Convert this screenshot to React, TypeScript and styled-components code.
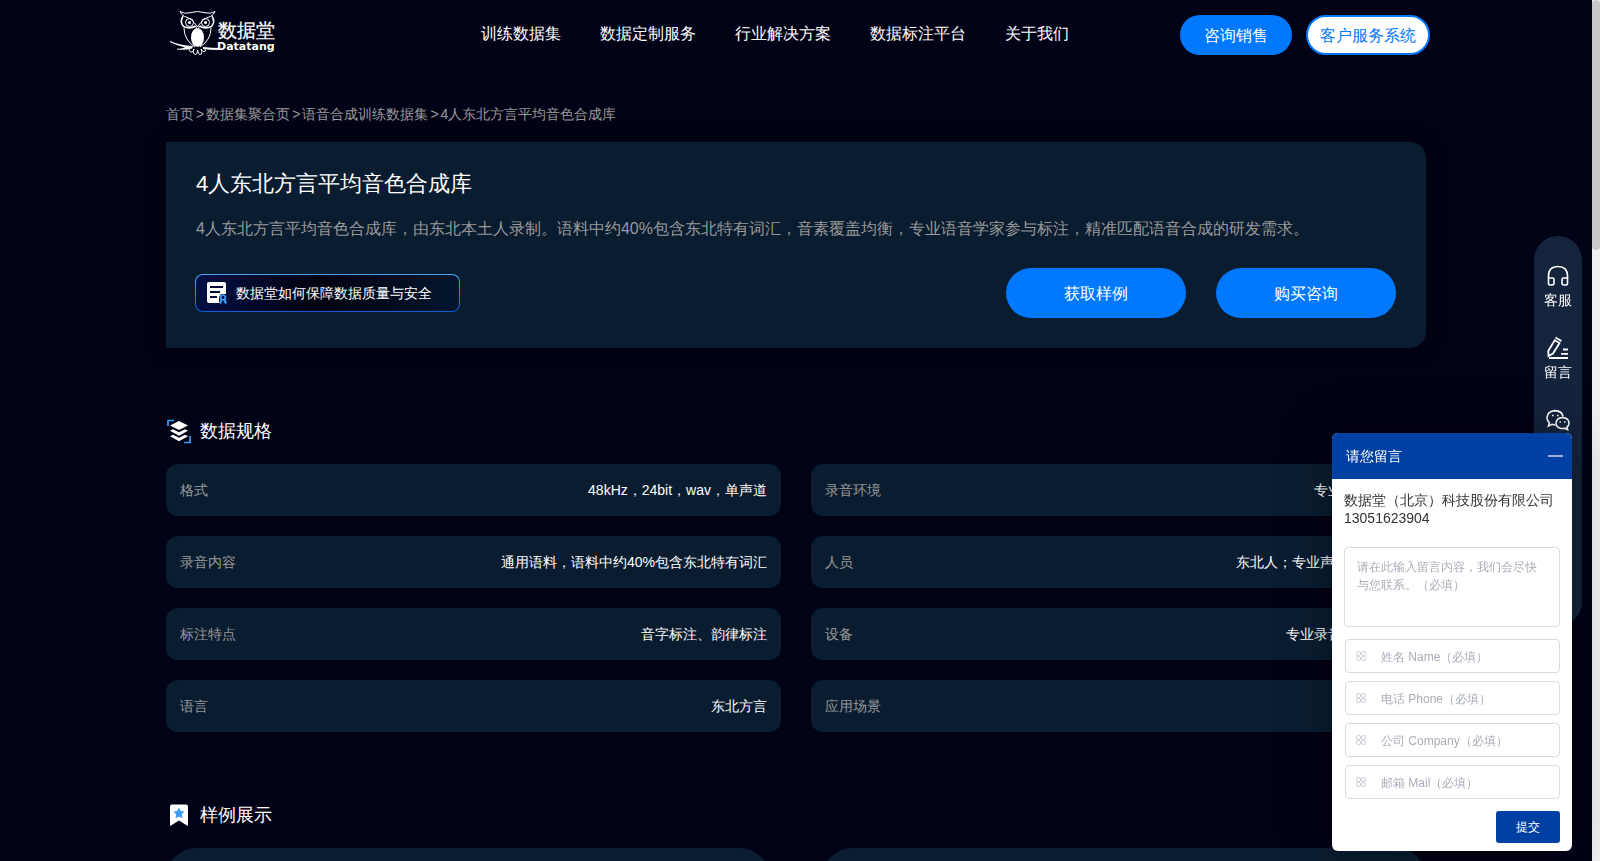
import React from 'react';
import styled, { createGlobalStyle, css } from 'styled-components';

const color = {
  page: '#020216',
  panel: '#0a1c30',
  blue: '#0079ff',
  chatBlue: '#0040a3',
  muted: '#999999',
  line: '#d9dae4',
  hint: '#a9adb8',
};

const GlobalStyle = createGlobalStyle`
  *, *::before, *::after { box-sizing: border-box; }
  body { margin: 0; background: ${color.page}; }
  body, button, input, textarea {
    font-family: "Liberation Sans", Arial, sans-serif;
  }
  h1, h2, p, ul, ol, dl, dd { margin: 0; padding: 0; font-weight: 400; }
  ul, ol { list-style: none; }
  a { color: inherit; text-decoration: none; }
  button { cursor: pointer; padding: 0; border: 0; }
`;

const Shell = styled.div`
  display: grid;
  grid-template-columns: minmax(0, 1fr) 8px;
  height: 100vh;
  color: #fff;
`;

const Scroller = styled.div`
  overflow: hidden auto;
  scrollbar-width: none;
`;

const ScrollTrack = styled.div`
  background: #f1f1f1;
`;

const ScrollThumb = styled.div`
  height: 29%;
  border-radius: 4px;
  background: #c9c9c9;
`;

const Header = styled.header`
  display: flex;
  align-items: flex-start;
  max-width: 1268px;
  height: 70px;
  margin: 0 auto;
  padding: 8px 0 0 6px;
`;

const NavList = styled.ul`
  display: flex;
  gap: 39px;
  margin-left: 203px;
  padding-top: 16px;
  font-size: 16px;
  line-height: 20px;
  white-space: nowrap;
`;

const HeaderActions = styled.div`
  display: flex;
  gap: 14px;
  margin-left: auto;
  padding-top: 7px;
`;

const PillButton = styled.button<{ $size: 'small' | 'large'; $outlined?: boolean }>`
  border-radius: 25px;
  background: ${color.blue};
  color: #fff;
  font-size: 16px;
  ${(p) =>
    p.$size === 'small'
      ? css`
          height: 40px;
          padding: 2px 24px 0;
        `
      : css`
          width: 180px;
          height: 50px;
          padding-top: 2px;
        `}
  ${(p) =>
    p.$outlined &&
    css`
      padding: 2px 12px 0;
      border: 2px solid ${color.blue};
      background: #fff;
      color: ${color.blue};
    `}
`;

const Main = styled.main`
  max-width: 1260px;
  margin: 0 auto;
`;

const Crumbs = styled.ol`
  display: flex;
  padding: 34px 0 18px;
  color: ${color.muted};
  font-size: 14px;
  line-height: 20px;
`;

const Crumb = styled.li`
  & + &::before {
    content: '>';
    margin: 0 2px;
  }
`;

const Hero = styled.section`
  padding: 28px 30px 30px;
  border-radius: 0 16px 16px 0;
  background: ${color.panel};
  box-shadow: 0 0 16px rgba(0, 0, 0, 0.5);
`;

const HeroTitle = styled.h1`
  font-size: 22px;
  line-height: 28px;
`;

const HeroText = styled.p`
  padding-top: 20px;
  color: ${color.muted};
  font-size: 16px;
  line-height: 22px;
`;

const HeroActions = styled.div`
  display: flex;
  align-items: center;
  gap: 30px;
  padding-top: 28px;
`;

const QualityLink = styled.a`
  display: flex;
  align-items: center;
  gap: 8px;
  width: 265px;
  height: 38px;
  margin: 0 auto 0 -1px;
  padding-left: 11px;
  border: 1px solid transparent;
  border-radius: 8px;
  background:
    linear-gradient(90deg, #001046, #02020f 45%, #03162e) padding-box,
    linear-gradient(180deg, #46a6f5, #1259d8) border-box;
  font-size: 14px;
  line-height: 18px;
`;

const Section = styled.section`
  padding-top: 70px;
`;

const SectionTitle = styled.h2`
  display: flex;
  align-items: center;
  gap: 9px;
  height: 26px;
  margin-bottom: 20px;
  padding-left: 1px;
  font-size: 18px;
`;

const SpecGrid = styled.dl`
  display: grid;
  grid-template-columns: 1fr 1fr;
  gap: 20px 30px;
`;

const SpecCard = styled.div`
  display: flex;
  align-items: center;
  justify-content: space-between;
  height: 52px;
  padding: 2px 14px 0;
  border-radius: 12px;
  background: ${color.panel};
  font-size: 14px;
`;

const SpecName = styled.dt`
  color: ${color.muted};
`;

const SampleGrid = styled.div`
  display: grid;
  grid-template-columns: 1fr 1fr;
  gap: 52px;
  padding-bottom: 60px;
`;

const SampleCard = styled.article`
  height: 140px;
  border-radius: 30px;
  background: ${color.panel};
`;

const SideBar = styled.aside`
  position: fixed;
  top: 236px;
  right: 18px;
  display: flex;
  flex-direction: column;
  gap: 20px;
  width: 48px;
  height: 390px;
  padding-top: 28px;
  border-radius: 24px;
  background: #14243d;
  color: #fff;
`;

const SideItem = styled.a`
  display: flex;
  flex-direction: column;
  align-items: center;
  gap: 2px;
  height: 52px;
  font-size: 14px;
  line-height: 20px;
`;

const Chat = styled.form`
  position: fixed;
  right: 28px;
  bottom: 10px;
  width: 240px;
  border-radius: 6px;
  background: #fff;
  box-shadow: 0 0 50px rgba(0, 0, 0, 0.35);
  color: #333;
`;

const ChatHeader = styled.header`
  display: flex;
  align-items: center;
  justify-content: space-between;
  height: 46px;
  padding: 0 9px 0 14px;
  border-radius: 6px 6px 0 0;
  background: ${color.chatBlue};
  color: #fff;
  font-size: 14px;
  line-height: 18px;
`;

const Minimize = styled.button`
  width: 15px;
  height: 16px;
  background: linear-gradient(#98b2dc, #98b2dc) center / 15px 2px no-repeat;
`;

const ChatBody = styled.div`
  display: flex;
  flex-direction: column;
  padding: 12px 12px 8px;
`;

const Company = styled.p`
  height: 56px;
  font-size: 14px;
  line-height: 18px;
`;

const fieldStyle = css`
  width: 100%;
  border: 1px solid ${color.line};
  border-radius: 4px;
  background: #fff;
  color: #333;
  font-size: 12px;
  outline: none;
  &::placeholder { color: ${color.hint}; opacity: 1; }
`;

const Message = styled.textarea`
  ${fieldStyle}
  height: 80px;
  margin-bottom: 12px;
  padding: 10px 12px;
  line-height: 18px;
  resize: none;
`;

const Field = styled.label`
  display: grid;
  align-items: center;
  margin: 0 0 8px 1px;
  > * { grid-area: 1 / 1; }
  > svg { margin-left: 11px; pointer-events: none; }
`;

const FieldInput = styled.input`
  ${fieldStyle}
  height: 34px;
  padding: 1px 8px 0 35px;
`;

const Submit = styled.button`
  align-self: flex-end;
  width: 64px;
  height: 32px;
  margin-top: 4px;
  border-radius: 3px;
  background: ${color.chatBlue};
  color: #fff;
  font-size: 12px;
`;

const Logo = () => (
  <svg width="110" height="50" viewBox="0 0 110 50" role="img" aria-label="数据堂 Datatang">
    <g fill="none" stroke="#fff" strokeWidth="1">
      <path d="M12 3.5 Q17 6 20 5 Q29.500 2 39 5 Q42 6 47 3.500" />
      <path d="M12 3.5 Q13.500 7 16.500 8.500 Q24 10 29.500 19 Q35 10 42.500 8.500 Q45.500 7 47 3.500" />
      <path strokeWidth="1.600" d="M15 8 Q11.500 14 15.500 18.500 Q22 21.500 27.500 18" />
      <path strokeWidth="1.600" d="M44 8 Q47.500 14 43.500 18.500 Q37 21.500 31.500 18" />
      <circle cx="21.500" cy="14.500" r="4" />
      <circle cx="37.500" cy="14.500" r="4" />
      <path d="M16 20 Q16 32 27 39" />
      <path d="M43 20 Q43 32 32 39" />
      <path d="M27.500 18 L29.500 23 L31.500 18" />
      <path d="M22 39.500 Q20 43 23 44 Q25 45 26 41 Q24 46 28 46.500 Q29.500 46 29.500 42 Q30 46 32 46.500 Q35 46 33 41 Q35 45 37 43.500 Q38.500 42 36 39.500" />
    </g>
    <g fill="#fff">
      <circle cx="21.500" cy="14.500" r="1.500" />
      <circle cx="37.500" cy="14.500" r="1.500" />
      <ellipse cx="29.500" cy="29.500" rx="6.500" ry="9.500" />
      <path d="M2 33 Q12 37.500 25 38 L24 40.500 Q18 42.500 9 41.500 L9 40.500 Q14 41 17 39.500 Q9 37.500 2 34.300 Z" />
      <path d="M35 39 Q44 40 52 40 L52 42 Q42 42 35 41 Z" />
      <text x="50" y="29" fontSize="19" stroke="#fff" strokeWidth="0.200">数据堂</text>
      <text x="49" y="42" fontSize="11" fontWeight="700" fontFamily="DejaVu Sans">Datatang</text>
    </g>
  </svg>
);

const CertificateIcon = () => (
  <svg width="21" height="22" viewBox="0 0 21 22" aria-hidden="true">
    <path fill="#fff" d="M2 0 H17 Q19 0 19 2 V12 H14 L12 15 V21 H2 Q0 21 0 19 V2 Q0 0 2 0 Z" />
    <path stroke="#02083a" strokeWidth="2" d="M3 5 H16 M3 10 H13 M3 15 H10" />
    <circle cx="16" cy="15.500" r="2.300" fill="#02083a" stroke="#3a97ee" strokeWidth="1.800" />
    <path stroke="#3a97ee" strokeWidth="2.200" d="M14.500 18 L13 21.500 M17.500 18 L19 21.500" />
  </svg>
);

const LayersIcon = () => (
  <svg width="24" height="25" viewBox="0 0 24 25" aria-hidden="true">
    <path fill="none" stroke="#3a9cf5" strokeWidth="1.700" d="M1 7 V1.500 H7 M23 17 V23.500 H17" />
    <g fill="#fff">
      <path d="M12 2 L21 6.500 L12 11 L3 6.500 Z" />
      <path d="M3 11.800 L6 10.300 L12 13.300 L18 10.300 L21 11.800 L12 16.700 Z" />
      <path d="M3 17.300 L6 15.800 L12 18.800 L18 15.800 L21 17.300 L12 22.200 Z" />
    </g>
  </svg>
);

const BookmarkIcon = () => (
  <svg width="24" height="24" viewBox="0 0 24 24" aria-hidden="true">
    <path fill="#fff" d="M5 1.500 H19 Q21 1.500 21 3.500 V22 Q21 23 20 22.500 L12 17.500 L4 22.500 Q3 23 3 22 V3.500 Q3 1.500 5 1.500 Z" />
    <path fill="#3f9df5" d="M12 4.500 L13.800 8 L17.500 8.600 L14.800 11.300 L15.400 15.200 L12 13.400 L8.600 15.200 L9.200 11.300 L6.500 8.600 L10.200 8 Z" />
  </svg>
);

const HeadsetIcon = () => (
  <svg width="24" height="24" viewBox="0 0 24 24" fill="none" stroke="#fff" strokeWidth="1.600" aria-hidden="true">
    <path d="M2.500 14 V12 Q2.500 2.500 12 2.500 Q21.500 2.500 21.500 12 V14" />
    <path d="M2.500 14 H6.500 Q8 14 8 15.500 V19 Q8 21 6 21 H4 Q2.500 21 2.500 19.500 Z M21.500 14 H17.500 Q16 14 16 15.500 V19 Q16 21 18 21 H20 Q21.500 21 21.500 19.500 Z" />
  </svg>
);

const PenIcon = () => (
  <svg width="24" height="24" viewBox="0 0 24 24" fill="none" stroke="#fff" strokeWidth="1.800" aria-hidden="true">
    <path d="M9.500 1.500 L15.500 5 M8.800 4.200 L13.500 7 L7 17.500 L2.500 20 L2.300 14.800 Z M3 22 H22 M17 13.500 H22 M15 17.800 H22" />
  </svg>
);

const WechatIcon = () => (
  <svg width="24" height="24" viewBox="0 0 24 24" fill="none" stroke="#fff" strokeWidth="1.600" aria-hidden="true">
    <path d="M9.500 17 Q7.500 17 6 16.300 L2.500 18 L3.300 14.700 Q1 12.500 1 9.800 Q1.500 3 9 2.600 Q16 3 17 8.500" />
    <path d="M16.500 9.500 Q22.700 10 23 15 Q23 17.500 21 19 L21.600 21.500 L18.700 20.200 Q16 21 13.500 20 Q10 18.500 10 15 Q10.500 10 16.500 9.500 Z" />
    <path strokeWidth="1.700" d="M6 7.500 H7.600 M11 7.500 H12.600 M13.500 14 H15 M18 14 H19.500" />
  </svg>
);

const CloverIcon = () => (
  <svg width="10" height="10" viewBox="0 0 10 10" fill="none" stroke="#cfd0da" aria-hidden="true">
    <rect x="0.500" y="0.500" width="4" height="4" rx="1.500" />
    <rect x="5.500" y="0.500" width="4" height="4" rx="1.500" />
    <rect x="0.500" y="5.500" width="4" height="4" rx="1.500" />
    <rect x="5.500" y="5.500" width="4" height="4" rx="1.500" />
  </svg>
);

const navItems = ['训练数据集', '数据定制服务', '行业解决方案', '数据标注平台', '关于我们'];
const crumbs = ['首页', '数据集聚合页', '语音合成训练数据集', '4人东北方言平均音色合成库'];
const specs = [
  ['格式', '48kHz，24bit，wav，单声道'],
  ['录音环境', '专业录音棚环境'],
  ['录音内容', '通用语料，语料中约40%包含东北特有词汇'],
  ['人员', '东北人；专业声音演员，4人'],
  ['标注特点', '音字标注、韵律标注'],
  ['设备', '专业录音麦克风设备'],
  ['语言', '东北方言'],
  ['应用场景', '语音合成'],
];
const fields = [
  { name: 'name', hint: '姓名 Name（必填）' },
  { name: 'phone', hint: '电话 Phone（必填）' },
  { name: 'company', hint: '公司 Company（必填）' },
  { name: 'mail', hint: '邮箱 Mail（必填）' },
];

export default function App() {
  return (
    <>
      <GlobalStyle />
      <Shell>
        <Scroller>
          <Header>
            <a href="#home"><Logo /></a>
            <nav>
              <NavList>
                {navItems.map((item) => (
                  <li key={item}><a href="#nav">{item}</a></li>
                ))}
              </NavList>
            </nav>
            <HeaderActions>
              <PillButton type="button" $size="small">咨询销售</PillButton>
              <PillButton type="button" $size="small" $outlined>客户服务系统</PillButton>
            </HeaderActions>
          </Header>
          <Main>
            <Crumbs>
              {crumbs.map((item) => (
                <Crumb key={item}><a href="#crumb">{item}</a></Crumb>
              ))}
            </Crumbs>
            <Hero>
              <HeroTitle>4人东北方言平均音色合成库</HeroTitle>
              <HeroText>
                4人东北方言平均音色合成库，由东北本土人录制。语料中约40%包含东北特有词汇，音素覆盖均衡，专业语音学家参与标注，精准匹配语音合成的研发需求。
              </HeroText>
              <HeroActions>
                <QualityLink href="#quality">
                  <CertificateIcon />
                  数据堂如何保障数据质量与安全
                </QualityLink>
                <PillButton type="button" $size="large">获取样例</PillButton>
                <PillButton type="button" $size="large">购买咨询</PillButton>
              </HeroActions>
            </Hero>
            <Section>
              <SectionTitle><LayersIcon />数据规格</SectionTitle>
              <SpecGrid>
                {specs.map(([name, value]) => (
                  <SpecCard key={name}>
                    <SpecName>{name}</SpecName>
                    <dd>{value}</dd>
                  </SpecCard>
                ))}
              </SpecGrid>
            </Section>
            <Section>
              <SectionTitle><BookmarkIcon />样例展示</SectionTitle>
              <SampleGrid>
                <SampleCard />
                <SampleCard />
              </SampleGrid>
            </Section>
          </Main>
        </Scroller>
        <ScrollTrack aria-hidden="true"><ScrollThumb /></ScrollTrack>
      </Shell>
      <SideBar>
        <SideItem href="#service"><HeadsetIcon />客服</SideItem>
        <SideItem href="#message"><PenIcon />留言</SideItem>
        <SideItem href="#wechat" aria-label="WeChat"><WechatIcon /></SideItem>
      </SideBar>
      <Chat>
        <ChatHeader>
          请您留言
          <Minimize type="button" aria-label="最小化" />
        </ChatHeader>
        <ChatBody>
          <Company>数据堂（北京）科技股份有限公司<br />13051623904</Company>
          <Message aria-label="留言内容" placeholder="请在此输入留言内容，我们会尽快与您联系。（必填）" />
          {fields.map((f) => (
            <Field key={f.name}>
              <FieldInput name={f.name} aria-label={f.hint} placeholder={f.hint} />
              <CloverIcon />
            </Field>
          ))}
          <Submit type="submit">提交</Submit>
        </ChatBody>
      </Chat>
    </>
  );
}
